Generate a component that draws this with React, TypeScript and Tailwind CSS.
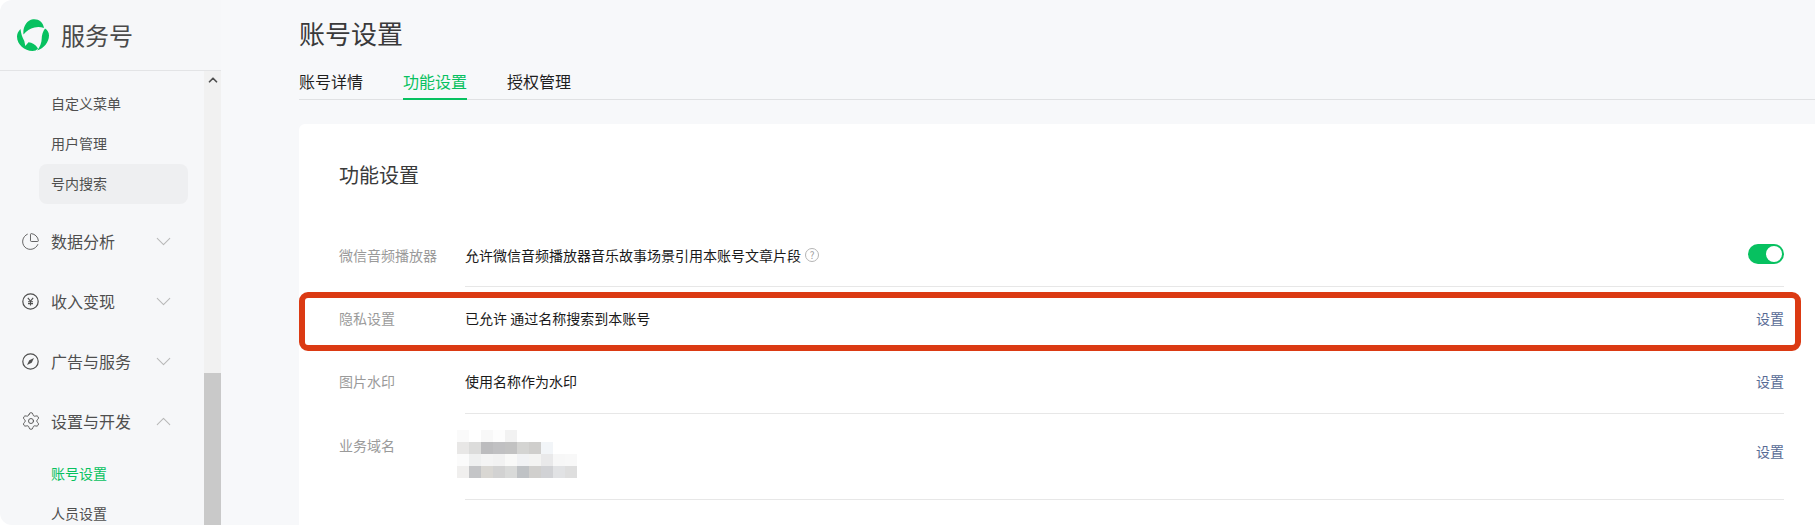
import { ChevronDown, ChevronUp, PieChart, Settings } from "lucide-react";

const FONT = "font-['Microsoft_YaHei','Noto_Sans_CJK_SC','Noto_Sans',sans-serif]";

const mosaic = [
  ["bg-[#fafafa]", "bg-[#ffffff]", "bg-[#f8f8f8]", "bg-[#fdfdfd]", "bg-[#f2f2f2]"],
  ["bg-[#e8e7e6]", "bg-[#dcdcdb]", "bg-[#bcbcbe]", "bg-[#c0c0c2]", "bg-[#c2c2c2]", "bg-[#d4d4d2]", "bg-[#cfcecc]", "bg-[#f2f5f8]"],
  ["bg-[#fbfbfb]", "bg-[#eff0f0]", "bg-[#f4f4f4]", "bg-[#f2f2f2]", "bg-[#f9f9f8]", "bg-[#f1f2f4]", "bg-[#f3f3f2]", "bg-[#e9e9ea]", "bg-[#f7f7f7]", "bg-[#f8f8f8]"],
  ["bg-[#f0efee]", "bg-[#c4c5c7]", "bg-[#d9d7d3]", "bg-[#d2d2d2]", "bg-[#d9dad9]", "bg-[#bfc2c5]", "bg-[#d0cfcd]", "bg-[#d1d2d5]", "bg-[#e1e2e4]", "bg-[#dedede]"],
];

function Logo() {
  return (
    <svg width="32" height="32" viewBox="0 0 32 32" fill="#07c160">
      <path d="M6.500 15.500C5.500 8.500 9.500 1 16 .2c5.500-.6 10 2.500 11 8.800C23.800 7.800 20.500 7.500 17.500 8.500 13 9.800 9.500 11.800 6.500 15.500Z" />
      <path d="M28 9.500C30.500 11 32 13.500 32 16.500c0 6.500-5 13-12 15 2.800-3 4.700-7.500 4.700-12 0-3.500 1.300-7 3.300-10Z" />
      <path d="M3.500 10C1 12.500 0 15 0 17.500 0 25.500 7.500 32 15.500 32c2.300 0 4.300-.8 5.500-2.500C18.500 25.500 15 23.500 11.500 23.300L8.300 27 7.300 22C5.300 18.500 4 14.500 3.500 10Z" />
    </svg>
  );
}

function YenIcon() {
  return (
    <svg width="17" height="17" viewBox="0 0 17 17" fill="none" stroke="currentColor" className="shrink-0">
      <circle cx="8.500" cy="8.500" r="7.700" strokeWidth="1.200" />
      <path d="M5.800 4.800 8.500 8.200 11.200 4.800M8.500 8.200V12.500M6 8.700H11M6 10.600H11" strokeWidth="1.100" />
    </svg>
  );
}

function CompassIcon() {
  return (
    <svg width="17" height="17" viewBox="0 0 17 17" fill="none" className="shrink-0">
      <circle cx="8.500" cy="8.500" r="7.700" stroke="currentColor" strokeWidth="1.200" />
      <path d="M12 5 9.700 9.700 5 12 7.300 7.300Z" fill="currentColor" />
    </svg>
  );
}

function SubItem({ label, active, selected }: { label: string; active?: boolean; selected?: boolean }) {
  return (
    <div
      className={`ml-[39px] w-[149px] h-10 pl-3 flex items-center rounded-lg text-sm ${
        selected ? "bg-[#eeeff1]" : ""
      } ${active ? "text-[#07c160]" : "text-[#4f4f4f]"}`}
    >
      <span className="-mt-[2px]">{label}</span>
    </div>
  );
}

function NavGroup({ label, icon, open }: { label: string; icon: React.ReactNode; open?: boolean }) {
  return (
    <div className="h-[60px] flex items-center pl-[22px] text-[#4f4f4f]">
      <span className="w-[17px] h-[17px] flex items-center justify-center">{icon}</span>
      <span className="ml-3 w-[100px] text-base leading-none -mt-[1px]">{label}</span>
      {open ? (
        <ChevronUp size={25} strokeWidth={1} className="text-[#b8b8b8] shrink-0" />
      ) : (
        <ChevronDown size={25} strokeWidth={1} className="text-[#b8b8b8] shrink-0" />
      )}
    </div>
  );
}

function Row({
  label,
  children,
  right,
  h,
  top = "pt-[21px]",
}: {
  label: string;
  children: React.ReactNode;
  right: React.ReactNode;
  h: string;
  top?: string;
}) {
  return (
    <div className="flex">
      <div className={`w-[126px] shrink-0 text-sm text-[#9a9a9a] leading-[22px] ${top}`}>{label}</div>
      <div className={`w-[1319px] flex justify-between items-start border-b border-[#e7e7e7] ${h}`}>
        {children}
        {right}
      </div>
    </div>
  );
}

const setLink = <span className="text-sm text-[#576b95] mt-5 leading-[22px]">设置</span>;

export default function App() {
  return (
    <div className={`${FONT} w-[1815px] h-[525px] overflow-hidden bg-white`}>
      <div className="flex h-full bg-[#f6f7f9] rounded-l-xl overflow-hidden">
        {/* Sidebar */}
        <aside className="w-[221px] shrink-0 flex flex-col h-full">
          <div className="h-[71px] shrink-0 border-b border-[#e3e4e6] flex items-center pl-[17px]">
            <Logo />
            <span className="ml-3 text-2xl text-[#4a4a4a]">服务号</span>
          </div>
          <div className="flex-1 min-h-0 flex">
            <nav className="w-[204px] pt-[13px] overflow-hidden">
              <SubItem label="自定义菜单" />
              <SubItem label="用户管理" />
              <SubItem label="号内搜索" selected />
              <div className="mt-[7px]">
                <NavGroup label="数据分析" icon={<PieChart size={19} strokeWidth={1.100} className="shrink-0" />} />
                <NavGroup label="收入变现" icon={<YenIcon />} />
                <NavGroup label="广告与服务" icon={<CompassIcon />} />
                <NavGroup label="设置与开发" icon={<Settings size={20} strokeWidth={1.100} className="shrink-0" />} open />
              </div>
              <div className="mt-[3px]">
                <SubItem label="账号设置" active />
                <SubItem label="人员设置" />
              </div>
            </nav>
            {/* Scrollbar */}
            <div className="w-[17px] bg-[#f1f1f1] flex flex-col">
              <div className="h-[302px] flex justify-center">
                <ChevronUp size={14} strokeWidth={3} className="text-[#505050] mt-[2px]" />
              </div>
              <div className="flex-1 bg-[#c9c9c9]" />
            </div>
          </div>
        </aside>

        {/* Main */}
        <main className="flex-1 min-w-0 bg-[#f7f8fa] pl-[78px] flex flex-col">
          <h1 className="h-[66px] pt-[14px] text-[26px] leading-[38px] font-normal text-[#3a3a3a]">账号设置</h1>
          <div className="h-[34px] flex gap-10 border-b border-[#e0e1e3] text-base text-[#1f1f1f]">
            <span className="leading-[30px]">账号详情</span>
            <span className="leading-[30px] h-[34px] border-b-2 border-[#07c160] text-[#07c160]">功能设置</span>
            <span className="leading-[30px]">授权管理</span>
          </div>

          <section className="relative mt-6 flex-1 bg-white rounded-tl-md pl-10">
            <h2 className="h-[99px] pt-[36px] text-xl leading-[30px] font-normal text-[#3a3a3a]">功能设置</h2>

            <Row
              label="微信音频播放器"
              h="h-[64px]"
              right={
                <span className="w-9 h-5 rounded-full bg-[#07c160] flex items-center justify-end pr-[2px] mt-[21px]">
                  <span className="w-4 h-4 rounded-full bg-white" />
                </span>
              }
            >
              <span className="flex items-center text-sm leading-[22px] mt-[21px] text-[#1a1a1a]">
                允许微信音频播放器音乐故事场景引用本账号文章片段
                <span className="ml-1 w-[14px] h-[14px] rounded-full border border-[#b5b5b5] text-[10px] leading-3 text-center text-[#a0a0a0]">?</span>
              </span>
            </Row>
            <Row label="隐私设置" h="h-[63px]" top="pt-5" right={setLink}>
              <span className="text-sm leading-[22px] mt-5 text-[#1a1a1a]">已允许 通过名称搜索到本账号</span>
            </Row>
            <Row label="图片水印" h="h-[64px]" top="pt-5" right={setLink}>
              <span className="text-sm leading-[22px] mt-5 text-[#1a1a1a]">使用名称作为水印</span>
            </Row>
            <Row
              label="业务域名"
              h="h-[86px]"
              top="pt-5"
              right={<span className="text-sm text-[#576b95] mt-[26px] leading-[22px]">设置</span>}
            >
              <div className="-ml-2 mt-4 flex flex-col">
                {mosaic.map((cells, i) => (
                  <div key={i} className="flex h-3">
                    {cells.map((c, j) => (
                      <div key={j} className={`w-3 h-3 ${c}`} />
                    ))}
                  </div>
                ))}
              </div>
            </Row>

            {/* Annotation box */}
            <div className="absolute left-0 top-[168px] w-[1502px] h-[59px] border-[6px] border-[#db3a13] rounded-[9px]" />
          </section>
        </main>
      </div>
    </div>
  );
}
